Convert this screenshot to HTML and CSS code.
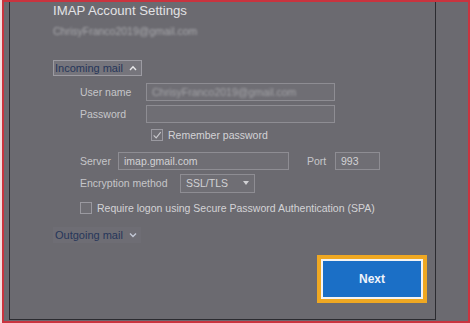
FILE: index.html
```html
<!DOCTYPE html>
<html lang="en">
<head>
    <meta charset="UTF-8">
    <meta name="viewport" content="width=device-width, initial-scale=1.0">
    <title>IMAP Account Settings</title>
    <link rel="stylesheet" href="styles.css">
</head>
<body>
    <div class="screen">
        <div class="dialog">
            <h1 class="title">IMAP Account Settings</h1>
            <div class="account">ChrisyFranco2019@gmail.com</div>

            <button class="section-toggle open">Incoming mail
                <svg class="caret" viewBox="0 0 8 6" width="8" height="6"><path d="M1 5 L4 1.8 L7 5" fill="none" stroke="#e8e8ea" stroke-width="1.4"/></svg>
            </button>

            <div class="form">
                <div class="row">
                    <label class="label label-wide">User name</label>
                    <div class="field field-long"><span class="blurred">ChrisyFranco2019@gmail.com</span></div>
                </div>
                <div class="row">
                    <label class="label label-wide">Password</label>
                    <div class="field field-long"></div>
                </div>
                <div class="row row-check remember">
                    <span class="checkbox checked">
                        <svg viewBox="0 0 12 12" width="10" height="10"><path d="M2 6.5 L5 9.5 L10.5 2.5" fill="none" stroke="#c9c9cc" stroke-width="1.3"/></svg>
                    </span>
                    <span class="check-text">Remember password</span>
                </div>
                <div class="row">
                    <label class="label label-server">Server</label>
                    <div class="field field-server">imap.gmail.com</div>
                    <label class="label label-port">Port</label>
                    <div class="field field-port">993</div>
                </div>
                <div class="row">
                    <label class="label label-enc">Encryption method</label>
                    <div class="field select">SSL/TLS
                        <svg viewBox="0 0 6 4" width="6" height="4"><path d="M0 0 H6 L3 4 Z" fill="#d0d0d3"/></svg>
                    </div>
                </div>
                <div class="row row-check spa">
                    <span class="checkbox"></span>
                    <span class="check-text">Require logon using Secure Password Authentication (SPA)</span>
                </div>
            </div>

            <button class="section-toggle closed">Outgoing mail
                <svg class="caret" viewBox="0 0 8 6" width="8" height="6"><path d="M1 1.5 L4 4.5 L7 1.5" fill="none" stroke="#c3c8d6" stroke-width="1.4"/></svg>
            </button>

            <div class="actions">
                <button class="next">Next</button>
            </div>
        </div>
    </div>
</body>
</html>
```

FILE: styles.css
```css
* {
    margin: 0;
    padding: 0;
    box-sizing: border-box;
}

body {
    font-family: 'Liberation Sans', Arial, sans-serif;
    background: #6b6a70;
    width: 470px;
    height: 323px;
    overflow: hidden;
}

.screen {
    height: 323px;
    border: 2px solid #c9343f;
    box-shadow: -2px 0 0 #f2dede;
    margin-left: 2px;
    padding-left: 5px;
    padding-right: 32px;
    background: #6b6a70;
}

.dialog {
    height: 318px;
    border: 1px solid #2b2b30;
    border-top: none;
    padding: 0 12px 0 43px;
    display: flex;
    flex-direction: column;
    color: #cfcfd2;
    font-size: 10.5px;
}

.title {
    font-size: 13.2px;
    font-weight: normal;
    color: #e2e2e5;
    line-height: 18px;
}

.account {
    margin-top: 5px;
    color: #a9a9ad;
    filter: blur(1.2px);
    font-size: 10.5px;
    line-height: 12px;
}

.section-toggle {
    font-family: inherit;
    font-size: 11px;
    color: #26365a;
    align-self: flex-start;
    height: 16px;
    line-height: 12px;
    display: flex;
    align-items: center;
    gap: 6px;
}

.section-toggle.open {
    background: #76757c;
    border: 1px solid #9c9ba2;
    padding: 1px 4px 1px 1px;
    margin-top: 23px;
}

.section-toggle.closed {
    background: #6e6d74;
    border: 1px solid transparent;
    padding: 1px 3px 1px 1px;
    margin-top: 8px;
}

.form {
    margin-top: 7px;
    padding-left: 27px;
    display: flex;
    flex-direction: column;
}

.row {
    display: flex;
    align-items: center;
    height: 18px;
    margin-bottom: 4px;
}

.label {
    color: #c6c6c9;
}

.label-wide {
    width: 66px;
}

.label-server {
    width: 38px;
}

.label-port {
    width: 28px;
    margin-left: 18px;
}

.label-enc {
    width: 100px;
}

.field {
    height: 18px;
    border: 1px solid #8e8d93;
    background: #6f6e74;
    color: #d2d2d5;
    padding: 0 5px;
    display: flex;
    align-items: center;
    font-size: 10.5px;
}

.field-long {
    width: 189px;
}

.blurred {
    filter: blur(1.3px);
    color: #a4a4a8;
}

.field-server {
    width: 171px;
}

.field-port {
    width: 45px;
}

.select {
    width: 75px;
    height: 19px;
    justify-content: space-between;
}

.row-check {
    height: 14px;
}

.remember {
    margin-top: 1px;
    padding-left: 71px;
    margin-bottom: 10px;
}

.spa {
    margin-top: 5px;
}

.checkbox {
    width: 12px;
    height: 12px;
    border: 1px solid #9a99a0;
    background: #6f6e74;
    margin-right: 5px;
    display: flex;
    align-items: center;
    justify-content: center;
}

.check-text {
    color: #d3d3d6;
}

.actions {
    margin-top: auto;
    margin-bottom: 20px;
    display: flex;
    justify-content: flex-end;
}

.next {
    width: 102px;
    height: 40px;
    background: #1b6fc6;
    border: 2px solid #f4f4f4;
    outline: 4px solid #efa822;
    color: #eef3fa;
    font-family: inherit;
    font-weight: bold;
    font-size: 12px;
}
```
